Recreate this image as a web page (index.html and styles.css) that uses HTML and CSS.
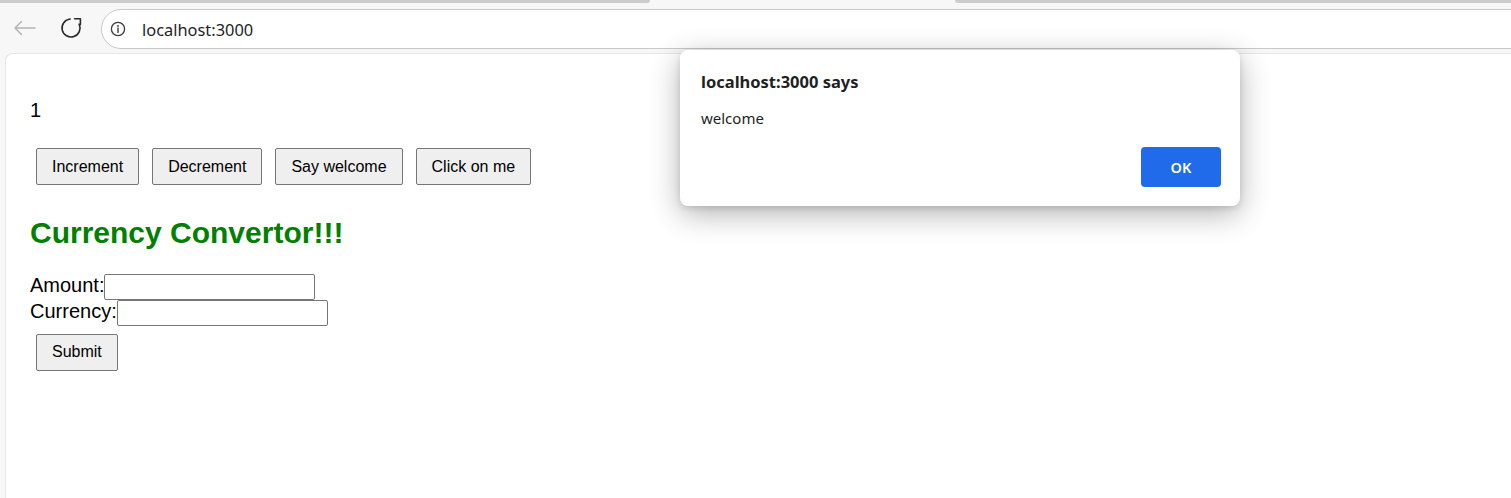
FILE: index.html
```html
<!DOCTYPE html>
<html lang="en">
<head>
<meta charset="utf-8">
<title>localhost:3000</title>
<link rel="stylesheet" href="styles.css">
</head>
<body>
<div class="browser">
  <div class="tabstrip">
    <div class="tab tab-left"></div>
    <div class="tab-gap"></div>
    <div class="tab tab-right"></div>
  </div>
  <div class="toolbar">
    <svg class="nav-icon back" width="24" height="24" viewBox="0 0 24 24">
      <path d="M22 12 H2 M8.5 5.5 L2 12 L8.5 18.5" fill="none" stroke="#b4b4b4" stroke-width="1.5" stroke-linecap="round" stroke-linejoin="round"/>
    </svg>
    <svg class="nav-icon reload" width="24" height="24" viewBox="0 0 24 24">
      <path d="M11.2 3.05 A 9 9 0 1 0 20.16 8.2" fill="none" stroke="#2b2b2b" stroke-width="1.6" stroke-linecap="round"/>
      <path d="M15.6 2.8 H21.4 V8.6" fill="none" stroke="#2b2b2b" stroke-width="1.6" stroke-linecap="round" stroke-linejoin="round"/>
    </svg>
    <div class="omnibox">
      <svg class="info" width="16" height="16" viewBox="0 0 16 16">
        <circle cx="8" cy="8" r="6.6" fill="none" stroke="#3c3c3c" stroke-width="1.3"/>
        <circle cx="8" cy="4.9" r="0.95" fill="#3c3c3c"/>
        <path d="M8 7 V11.4" stroke="#3c3c3c" stroke-width="1.4" stroke-linecap="round"/>
      </svg>
      <span class="url">localhost:3000</span>
    </div>
  </div>
  <div class="viewport">
    <div class="page">
      <p class="counter">1</p>
      <div class="actions">
        <button class="btn">Increment</button>
        <button class="btn">Decrement</button>
        <button class="btn">Say welcome</button>
        <button class="btn">Click on me</button>
      </div>
      <h2 class="title">Currency Convertor!!!</h2>
      <form class="form">
        <div class="row"><span>Amount:</span><input class="field" type="text"></div>
        <div class="row"><span>Currency:</span><input class="field" type="text"></div>
        <button class="btn submit" type="button">Submit</button>
      </form>
    </div>
  </div>
  <div class="dialog">
    <div class="dialog-title">localhost:3000 says</div>
    <div class="dialog-msg">welcome</div>
    <div class="dialog-actions"><button class="ok">OK</button></div>
  </div>
</div>
</body>
</html>
```

FILE: styles.css
```css
html, body {
  margin: 0;
  padding: 0;
  height: 100%;
  overflow: hidden;
}
body {
  background: #f7f7f7;
}
.browser {
  position: relative;
  height: 498px;
  display: flex;
  flex-direction: column;
  background: #f7f7f7;
}
.tabstrip {
  display: flex;
  height: 4px;
  flex: none;
}
.tab {
  height: 3px;
  background: #cccccc;
}
.tab-left {
  width: 650px;
  border-bottom-right-radius: 3px;
}
.tab-gap {
  width: 305px;
}
.tab-right {
  flex: 1;
  border-bottom-left-radius: 3px;
}
.toolbar {
  flex: none;
  height: 49px;
  display: flex;
  align-items: flex-start;
}
.nav-icon {
  flex: none;
  display: block;
}
.back {
  margin: 12px 0 0 13px;
}
.reload {
  margin: 12px 0 0 22px;
}
.omnibox {
  margin: 5px 0 0 18px;
  height: 40px;
  box-sizing: border-box;
  flex: 1;
  margin-right: -30px;
  border: 1px solid #c9c9c9;
  border-radius: 20px;
  background: #ffffff;
  display: flex;
  align-items: center;
}
.info {
  margin-left: 8px;
  flex: none;
}
.url {
  margin-left: 16px;
  font-family: "Noto Sans", "Open Sans", sans-serif;
  font-size: 16.4px;
  color: #1f1f1f;
}
.viewport {
  flex: 1;
  margin-left: 5px;
  background: #ffffff;
  border-top: 1px solid #e6e6e6;
  border-left: 1px solid #e6e6e6;
  border-top-left-radius: 8px;
  font-family: "Liberation Sans", Arial, sans-serif;
  color: #000;
}
.page {
  padding-left: 24px;
}
.counter {
  margin: 45px 0 0;
  font-size: 20px;
  line-height: 23px;
}
.actions {
  display: flex;
  gap: 13px;
  margin: 26px 0 0 6px;
}
.btn {
  height: 37px;
  box-sizing: border-box;
  padding: 0 15px;
  font-family: "Liberation Sans", Arial, sans-serif;
  font-size: 16px;
  color: #000;
  background: #efefef;
  border: 1px solid #767676;
  border-radius: 2px;
}
.title {
  margin: 30.5px 0 0;
  font-size: 30px;
  line-height: 34.5px;
  font-weight: bold;
  color: #008000;
}
.form {
  margin: 24px 0 0;
  font-size: 20px;
  line-height: 23px;
}
.row {
  display: flex;
  align-items: baseline;
  height: 26px;
}
.field {
  width: 211px;
  height: 25.5px;
  box-sizing: border-box;
  padding: 0 2px;
  margin: 0;
  font-family: "Liberation Sans", Arial, sans-serif;
  font-size: 16px;
  border: 1px solid #767676;
  border-radius: 2px;
  background: #fff;
}
.submit {
  display: block;
  margin: 7.7px 0 0 6px;
}
.dialog {
  position: absolute;
  left: 680px;
  top: 50px;
  width: 560px;
  height: 156px;
  box-sizing: border-box;
  padding: 20.5px 19px 0 21px;
  background: #ffffff;
  border-radius: 8px;
  box-shadow: 0 8px 30px rgba(0, 0, 0, 0.3), 0 2px 6px rgba(0, 0, 0, 0.12);
  font-family: "Noto Sans", "Open Sans", sans-serif;
  color: #1f1f1f;
}
.dialog-title {
  font-size: 16.5px;
  line-height: 22px;
  font-weight: 700;
}
.dialog-msg {
  margin-top: 15px;
  font-size: 15px;
  line-height: 20px;
}
.dialog-actions {
  display: flex;
  justify-content: flex-end;
  margin-top: 19.2px;
}
.ok {
  width: 80px;
  height: 40px;
  border: none;
  border-radius: 4px;
  background: #1f6be9;
  color: #ffffff;
  font-family: "Noto Sans", "Open Sans", sans-serif;
  font-size: 14.5px;
  font-weight: 600;
}
```
